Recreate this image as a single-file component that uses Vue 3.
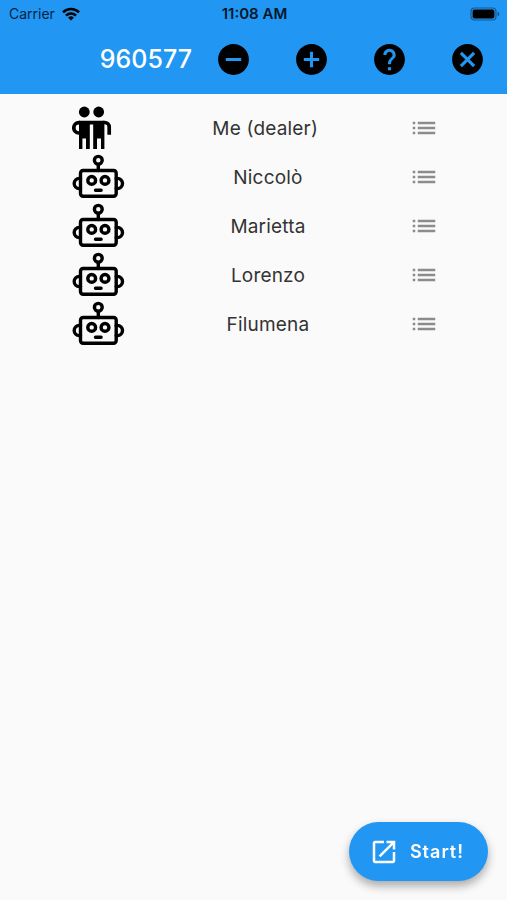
<script setup>
const code = '960577'

const actions = [
  { label: 'Remove player', path: 'M12 2C6.48 2 2 6.48 2 12s4.48 10 10 10 10-4.48 10-10S17.52 2 12 2zm5 11H7v-2h10v2z' },
  { label: 'Add player', path: 'M12 2C6.48 2 2 6.48 2 12s4.48 10 10 10 10-4.48 10-10S17.52 2 12 2zm5 11h-4v4h-2v-4H7v-2h4V7h2v4h4v2z' },
  { label: 'Help', path: 'M12 2C6.48 2 2 6.48 2 12s4.48 10 10 10 10-4.48 10-10S17.52 2 12 2zm1 17h-2v-2h2v2zm2.07-7.75l-.9.92C13.45 12.9 13 13.5 13 15h-2v-.5c0-1.1.45-2.1 1.17-2.83l1.24-1.26c.37-.36.59-.86.59-1.41 0-1.1-.9-2-2-2s-2 .9-2 2H8c0-2.21 1.79-4 4-4s4 1.79 4 4c0 .88-.36 1.68-.93 2.25z' },
  { label: 'Close', path: 'M12 2C6.47 2 2 6.47 2 12s4.47 10 10 10 10-4.47 10-10S17.53 2 12 2zm5 13.59L15.59 17 12 13.41 8.41 17 7 15.59 10.59 12 7 8.41 8.41 7 12 10.59 15.59 7 17 8.41 13.41 12 17 15.59z' },
]

const players = [
  { name: 'Me (dealer) ', human: true },
  { name: 'Niccolò', human: false },
  { name: 'Marietta', human: false },
  { name: 'Lorenzo', human: false },
  { name: 'Filumena', human: false },
]
</script>

<template>
  <div class="page">
    <header class="header">
      <div class="status">
        <div class="carrier">
          <span>Carrier</span>
          <svg class="wifi" viewBox="0 0 18 14" aria-hidden="true">
            <g fill="none" stroke="#000" stroke-width="2.6">
              <path d="M1 5.3a11.3 11.3 0 0 1 16 0" />
              <path d="M4 8.6a7.1 7.1 0 0 1 10 0" />
            </g>
            <path d="M9 13.6 6.1 10.7a4.1 4.1 0 0 1 5.8 0z" />
          </svg>
        </div>
        <span class="time">11:08 AM</span>
        <svg class="battery" viewBox="0 0 30 14" aria-hidden="true">
          <rect x="1" y="1" width="25" height="12" rx="3.5" fill="none" stroke="#000" stroke-opacity=".4" stroke-width="1.2" />
          <rect x="2.6" y="2.6" width="21.8" height="8.8" rx="2" />
          <path d="M27.6 4.8c2.4.8 2.4 3.6 0 4.4z" fill-opacity=".45" />
        </svg>
      </div>
      <div class="toolbar">
        <h1 class="title">{{ code }}</h1>
        <button v-for="a in actions" :key="a.label" class="action" type="button" :aria-label="a.label">
          <svg viewBox="0 0 24 24" aria-hidden="true"><path :d="a.path" /></svg>
        </button>
      </div>
    </header>

    <main>
      <ul class="players">
        <li v-for="p in players" :key="p.name" class="player">
          <svg v-if="p.human" class="avatar" viewBox="0 0 54 48" aria-hidden="true">
            <circle cx="12.3" cy="8" r="5.4" />
            <circle cx="26.7" cy="8" r="5.4" />
            <path d="M7 16.7H32.4V45H29V34.6H25V45H21.2V20.4H17.8V45H14V34.6H10.4V45H7z" />
            <path d="M8 18.6H7a5.2 5.2 0 0 0 0 10.4H8M31 18.5h1.6a4.6 4.6 0 0 1 4.6 4.6v7.6" fill="none" stroke="#000" stroke-width="3.7" />
          </svg>
          <svg v-else class="avatar" viewBox="0 0 54 48" fill="none" stroke="#000" stroke-width="3.4" stroke-linecap="round" aria-hidden="true">
            <circle cx="26.3" cy="7.3" r="3.9" />
            <path d="M26.3 11.5v6M23.5 37.3h5.6" />
            <rect x="8.5" y="17.5" width="35.7" height="25.7" rx="2.6" />
            <circle cx="19.7" cy="27.4" r="3.9" />
            <circle cx="33" cy="27.4" r="3.9" />
            <path d="M8.5 25.4H7.3a5.1 5.1 0 0 0 0 10.2h1.2M44.2 25.4h1.2a5.1 5.1 0 0 1 0 10.2h-1.2" />
          </svg>
          <span class="name">{{ p.name }}</span>
          <button class="menu" type="button" :aria-label="`Options for ${p.name}`">
            <svg viewBox="0 0 24 24" aria-hidden="true">
              <path d="M3 13h2v-2H3v2zm0 4h2v-2H3v2zm0-8h2V7H3v2zm4 4h14v-2H7v2zm0 4h14v-2H7v2zM7 7v2h14V7H7z" />
            </svg>
          </button>
        </li>
      </ul>
    </main>

    <button class="start" type="button">
      <svg viewBox="0 0 24 24" aria-hidden="true">
        <path d="M19 19H5V5h7V3H5c-1.11 0-2 .9-2 2v14c0 1.1.89 2 2 2h14c1.1 0 2-.9 2-2v-7h-2v7zM14 3v2h3.59l-9.83 9.83 1.41 1.41L19 6.41V10h2V3h-7z" />
      </svg>
      <span>Start!</span>
    </button>
  </div>
</template>

<style>
body {
  margin: 0;
  background: #fafafa;
}
</style>

<style scoped>
.page {
  min-height: 100vh;
  background: #fafafa;
  font-family: Inter, "Liberation Sans", sans-serif;
  color: #333;
}

button {
  margin: 0;
  padding: 0;
  border: 0;
  background: none;
  font: inherit;
  cursor: pointer;
}

svg {
  display: block;
  flex: none;
}

.header {
  background: #2196f3;
}

.status {
  display: grid;
  grid-template-columns: 1fr auto 1fr;
  align-items: center;
  height: 27px;
  padding: 0 7px 0 9px;
  font-size: 14px;
  line-height: 20px;
  color: #06243d;
}

.carrier {
  display: flex;
  align-items: center;
  gap: 7px;
}

.wifi {
  width: 18px;
  height: 14px;
}

.time {
  font-size: 15px;
  font-weight: 600;
  color: #04182a;
}

.battery {
  width: 30px;
  height: 14px;
  justify-self: end;
}

.toolbar {
  display: flex;
  align-items: center;
  padding: 0 1px 3px 0;
}

.title {
  flex: 1;
  margin: 0;
  padding-right: 2px;
  text-align: right;
  font-size: 25px;
  line-height: 32px;
  font-weight: 500;
  color: #fff;
}

.action {
  display: flex;
  align-items: center;
  justify-content: center;
  width: 78px;
  height: 64px;
}

.action svg {
  width: 37px;
  height: 37px;
}

.players {
  margin: 0;
  padding: 9px 5px 0 34px;
  list-style: none;
}

.player {
  display: grid;
  grid-template-columns: repeat(3, minmax(0, 1fr));
  align-items: center;
  height: 49px;
}

.avatar {
  width: 54px;
  height: 48px;
  margin-left: 38px;
}

.name {
  padding-top: 2px;
  text-align: center;
  white-space: pre;
  font-size: 19px;
  line-height: 24px;
  letter-spacing: 0.01em;
}

.menu {
  justify-self: center;
}

.menu svg {
  width: 30px;
  height: 30px;
  fill: #8c8c8c;
}

.start {
  position: fixed;
  right: 19px;
  bottom: 19px;
  display: flex;
  align-items: center;
  gap: 11px;
  height: 59px;
  padding: 0 24px 0 20px;
  border-radius: 30px;
  background: #2196f3;
  box-shadow: 0 5px 10px rgba(0, 0, 0, 0.32);
  color: #fff;
  font-size: 18px;
  line-height: 24px;
  font-weight: 600;
  letter-spacing: 1px;
}

.start svg {
  width: 30px;
  height: 30px;
  fill: #fff;
}
</style>
